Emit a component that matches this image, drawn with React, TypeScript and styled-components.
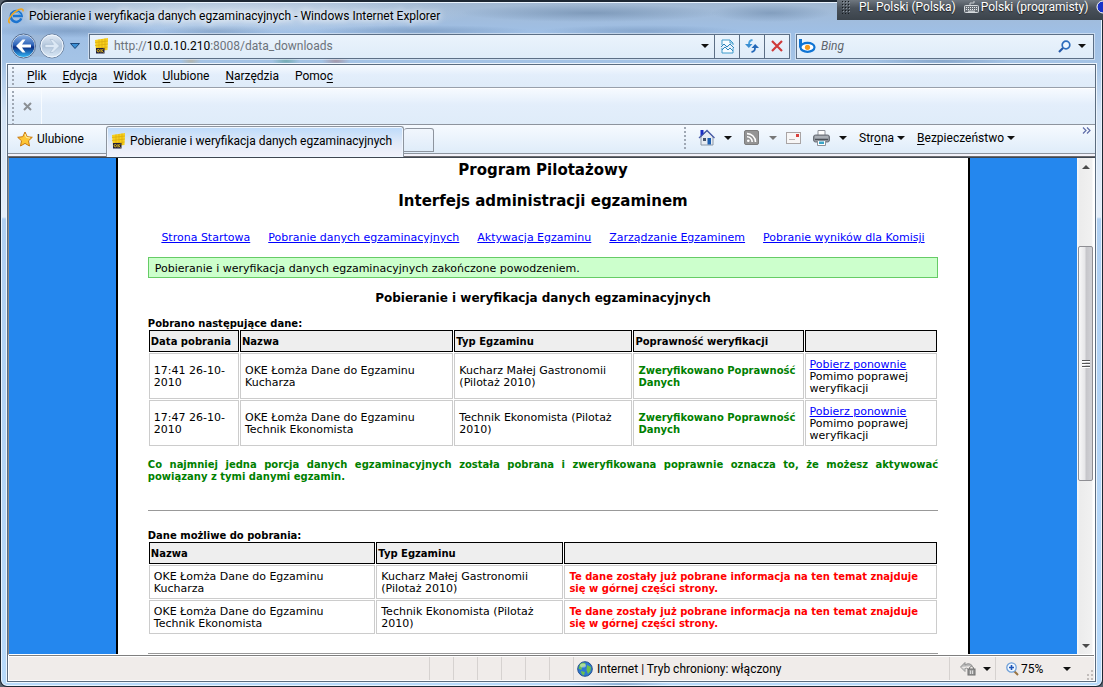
import React from "react";
import styled, { createGlobalStyle, css } from "styled-components";

const uiFont = `Roboto, "Open Sans", "Liberation Sans", sans-serif`;
const pageFont = `"DejaVu Sans", "Liberation Sans", sans-serif`;

const GlobalStyle = createGlobalStyle`
  *, *::before, *::after { box-sizing: border-box; }
  html, body, #root { height: 100%; }
  body { margin: 0; background: #59636e; font-family: ${uiFont}; font-size: 12px; line-height: 16px; color: #000; }
  button, input { font: inherit; color: inherit; }
  button { border: 0; padding: 0; background: none; }
  svg { display: block; flex: none; }
  u { text-underline-offset: 2px; }
`;

/* ---------- window frame ---------- */

const Window = styled.div`
  position: relative;
  height: 100vh;
  display: flex;
  flex-direction: column;
  padding: 1px 7px 4px;
  border: 1px solid #1d2733;
  border-top-width: 2px;
  border-radius: 7px;
  overflow: hidden;
  background:
    radial-gradient(ellipse 240px 20px at 230px 12px, rgba(235, 243, 250, 0.6), transparent),
    radial-gradient(ellipse 90px 7px at 70px 29px, rgba(90, 122, 162, 0.4), transparent),
    radial-gradient(ellipse 60px 6px at 215px 29px, rgba(90, 122, 162, 0.4), transparent),
    radial-gradient(ellipse 110px 6px at 420px 29px, rgba(90, 122, 162, 0.4), transparent),
    radial-gradient(ellipse 100px 6px at 640px 29px, rgba(90, 122, 162, 0.35), transparent),
    radial-gradient(ellipse 130px 9px at 590px 11px, rgba(85, 115, 150, 0.45), transparent),
    radial-gradient(ellipse 60px 9px at 770px 11px, rgba(85, 115, 150, 0.4), transparent),
    radial-gradient(ellipse 14px 5px at 285px 59px, rgba(70, 150, 130, 0.5), transparent),
    radial-gradient(ellipse 14px 5px at 335px 59px, rgba(170, 90, 80, 0.4), transparent),
    radial-gradient(ellipse 10px 5px at 190px 59px, rgba(200, 160, 90, 0.4), transparent),
    radial-gradient(ellipse 70px 4px at 940px 59px, rgba(90, 122, 162, 0.4), transparent),
    radial-gradient(ellipse 50px 5px at 620px 683px, rgba(90, 125, 165, 0.5), transparent),
    linear-gradient(#a3b9d2 0, #9fbfe5 30px, #a5c4e6 62px, #d3e3f5 110px, #e4eef9 215px, #b0d0f2 217px, #b8dafa 100%);
  box-shadow: inset 0 0 0 1px #e9f3fd;
`;

const TitleBar = styled.header`
  display: flex;
  align-items: center;
  gap: 5px;
  height: 26px;
  flex: none;
`;

const Title = styled.h1`
  margin: 0;
  font-size: 12px;
  line-height: 16px;
  font-weight: 400;
  text-shadow: 0 0 6px #fff, 0 0 8px #fff;
`;

const LanguageBar = styled.aside`
  position: absolute;
  top: 0;
  right: 0;
  width: 266px;
  height: 20px;
  display: flex;
  align-items: center;
  padding: 0 0 6px 4px;
  background: linear-gradient(#6f7780, #49515a 40%, #3b434b);
  color: #fff;
  overflow: hidden;
  white-space: nowrap;
`;

const GripDots = styled.svg`
  margin-right: 9px;
`;

const LanguageName = styled.span`
  margin-right: 8px;
  text-shadow: 0 1px 1px #222;
`;

const LayoutName = styled(LanguageName)`
  margin-left: 2px;
`;

const NavBar = styled.nav`
  display: flex;
  align-items: center;
  height: 35px;
  padding: 0 1px 1px 3px;
  flex: none;
`;

const NavButtons = styled.div`
  display: flex;
  align-items: center;
  width: 78px;
`;

const PlainButton = styled.button`
  display: flex;
  align-items: center;
  justify-content: center;
`;

const HistoryButton = styled(PlainButton)`
  margin-left: 5px;
`;

const Field = styled.div<{ $fixed?: boolean }>`
  display: flex;
  align-items: center;
  height: 25px;
  border: 1px solid #5c6f86;
  box-shadow: 0 0 0 1px rgba(255, 255, 255, 0.45);
  background: linear-gradient(#eaf3fc, #dfecf9);
  ${(p) => (p.$fixed ? css`width: 298px; flex: none; margin-left: 6px; padding: 0 2px;` : css`flex: 1; min-width: 0; padding-left: 4px;`)}
`;

const AddressText = styled.label`
  position: relative;
  flex: 1;
  min-width: 0;
  margin-left: 5px;
  color: #6c737b;
  white-space: nowrap;
  b { font-weight: 400; color: #000; }
`;

const HiddenInput = styled.input`
  position: absolute;
  inset: 0;
  width: 100%;
  border: 0;
  padding: 0;
  background: transparent;
  color: transparent;
  outline: 0;
`;

const SearchInput = styled.input`
  flex: 1;
  min-width: 0;
  margin-left: 5px;
  border: 0;
  padding: 0;
  background: transparent;
  outline: 0;
  &::placeholder { color: #5d646c; font-style: italic; opacity: 1; }
`;

const FieldButton = styled(PlainButton)<{ $framed?: boolean }>`
  height: 23px;
  width: ${(p) => (p.$framed ? 25 : 18)}px;
  border-left: ${(p) => (p.$framed ? "1px solid #5c6f86" : "0")};
`;

/* ---------- inner area ---------- */

const Inner = styled.div`
  flex: 1;
  min-height: 0;
  display: flex;
  flex-direction: column;
  border: 1px solid #5b6c7f;
  box-shadow: 0 0 0 1px #edf5fd;
  background: #fff;
  margin-right: -1px;
  margin-left: -1px;
`;

const barFill = css`
  background: linear-gradient(#f6faff, #e3eefb 45%, #dfecf9);
`;

const DottedEdge = styled.span`
  width: 2px;
  align-self: stretch;
  background: radial-gradient(circle, #9fa8b4 1px, transparent 1px) 0 1px / 2px 4px;
  flex: none;
`;

const MenuBar = styled.div`
  ${barFill}
  display: flex;
  align-items: center;
  height: 23px;
  padding-left: 4px;
  border-bottom: 1px solid #98a0ab;
  flex: none;
`;

const MenuItem = styled.button`
  margin-right: 16px;
  &:first-of-type { margin-left: 13px; }
`;

const EmptyBar = styled.div`
  ${barFill}
  display: flex;
  align-items: center;
  height: 36px;
  padding-left: 4px;
  border-top: 1px solid #fff;
  flex: none;
`;

const CloseCell = styled(PlainButton)`
  width: 28px;
  height: 35px;
  border-right: 1px solid #f7fbff;
`;

const TabRow = styled.div`
  display: flex;
  align-items: stretch;
  height: 33px;
  padding-bottom: 4px;
  border-top: 1px solid #8d949e;
  border-bottom: 1px solid #6d6d70;
  background:
    linear-gradient(#f6faff, #dfecf9) 0 0 / 100% 28px no-repeat,
    linear-gradient(#8d949e, #8d949e) 0 28px / 100% 1px no-repeat,
    #f3f2fa;
  flex: none;
`;

const Favorites = styled(PlainButton)`
  width: 98px;
  justify-content: flex-start;
  gap: 4px;
  padding-left: 9px;
`;

const Tab = styled.button`
  display: flex;
  align-items: center;
  gap: 4px;
  width: 298px;
  height: 31px;
  margin-top: 1px;
  padding: 0 4px 3px;
  border: 1px solid #8d949e;
  border-bottom: 0;
  border-radius: 3px 3px 0 0;
  background: linear-gradient(#bcdafa, #dfe9f8 50%, #f3f2fa);
  box-shadow: inset 0 0 0 1px #eef6ff;
  white-space: nowrap;
`;

const NewTab = styled.button`
  width: 30px;
  margin-top: 3px;
  border: 1px solid #8d949e;
  border-left: 0;
  border-radius: 3px 3px 0 0;
  background: linear-gradient(#f1f6fd, #dfecf9);
`;

const Commands = styled.div`
  flex: 1;
  display: flex;
  align-items: center;
  justify-content: flex-end;
  padding: 0 3px 2px 0;
`;

const CommandButton = styled(PlainButton)<{ $before?: number }>`
  gap: 3px;
  margin-left: ${(p) => p.$before ?? 10}px;
  white-space: nowrap;
`;

const Overflow = styled(PlainButton)`
  width: 12px;
  height: 21px;
  margin-left: 65px;
  align-items: flex-start;
`;

/* ---------- page ---------- */

const Viewport = styled.main`
  flex: 1;
  min-height: 0;
  display: flex;
  border-top: 1px solid #3f4650;
  border-left: 1px solid #8b8b8b;
  border-bottom: 1px solid #fff;
`;

const Canvas = styled.div`
  flex: 1;
  min-width: 0;
  overflow: hidden;
  background: #2487ee;
  font-family: ${pageFont};
  font-size: 11px;
  line-height: 12px;
`;

const Sheet = styled.div`
  width: 80%;
  min-height: 100%;
  margin: 0 auto;
  padding: 2px 30px 0;
  border: solid #000;
  border-width: 0 2px;
  background: #fff;
`;

const PageTitle = styled.h2`
  margin: 0 0 11px;
  font-size: 15px;
  line-height: 20px;
  text-align: center;
`;

const PageLinks = styled.nav`
  display: flex;
  justify-content: center;
  gap: 18px;
  margin: 21px 0 13px;
  white-space: nowrap;
`;

const PageLink = styled.a`
  color: #0000ff;
  text-decoration: underline;
`;

const Notice = styled.p`
  margin: 0 0 12px;
  padding: 5px 6px 2px;
  line-height: 12px;
  border: 1px solid #66cc66;
  background: #ccffcc;
`;

const SectionTitle = styled.h3`
  margin: 0 0 12px;
  font-size: 12px;
  line-height: 16px;
  text-align: center;
`;

const DataTable = styled.table`
  width: 100%;
  table-layout: fixed;
  border-spacing: 1px;
  caption { text-align: left; font-size: 10px; line-height: 11px; font-weight: 700; white-space: nowrap; }
  th { height: 22px; padding: 5px 1px 3px; font-size: 10px; text-align: left; border: 1px solid #000; background: #eee; white-space: nowrap; }
  td { padding: 5px 4px 3px; border: 1px solid #ccc; }
`;

const Col = styled.col<{ $w: number }>`
  width: ${(p) => p.$w}%;
`;

const Strong = styled.strong<{ $tone: "ok" | "warn" }>`
  display: block;
  font-size: 10px;
  color: ${(p) => (p.$tone === "ok" ? "#008000" : "#ff0000")};
`;

const Summary = styled.p`
  margin: 12px 0 27px;
  color: #008000;
  font-size: 10px;
  font-weight: 700;
  text-align: justify;
`;

const Rule = styled.hr`
  margin: 18px 0 19px;
  border: 0;
  border-top: 1px solid #999;
`;

const ScrollBar = styled.div`
  width: 18px;
  display: flex;
  flex-direction: column;
  align-items: flex-start;
  background: linear-gradient(90deg, #fafafa, #ececec 3px, #f1f1f1 15px, #fff 16px);
  flex: none;
`;

const ScrollButton = styled(PlainButton)`
  width: 18px;
  height: 17px;
`;

const ScrollTrack = styled.div`
  flex: 1;
  padding: 71px 0 0 1px;
`;

const ScrollThumb = styled.button`
  display: flex;
  align-items: center;
  justify-content: center;
  width: 15px;
  height: 60%;
  min-height: 20px;
  border: 1px solid #8e8e93;
  border-radius: 2px;
  background: linear-gradient(90deg, #f8f8f8, #e6e6e8 45%, #c6c6ca 55%, #d2d2d6);
`;

const StatusBar = styled.footer`
  display: flex;
  align-items: stretch;
  height: 26px;
  border: 1px solid #fff;
  border-top: 0;
  background: linear-gradient(#7f7f7f, #7f7f7f) 0 0 / 100% 1px no-repeat, linear-gradient(#fff, #fff) 0 0 / 100% 2px no-repeat, #f0ecea;
  flex: none;
`;

const StatusCell = styled.div<{ $w?: number }>`
  ${(p) => (p.$w ? css`width: ${p.$w}px; flex: none;` : css`flex: 1;`)}
  display: flex;
  align-items: center;
  gap: 4px;
  margin-top: 2px;
  padding-left: 3px;
  border-left: 1px solid #d6d2d0;
  white-space: nowrap;
  &:first-child { border-left: 0; }
`;

const StatusSpacer = styled(StatusCell)`
  flex: 0 0 420px;
`;

const StatusTool = styled(PlainButton)<{ $wide?: boolean }>`
  flex: 1;
  justify-content: flex-start;
  gap: ${(p) => (p.$wide ? 2 : 7)}px;
  padding-left: 7px;
  > svg:last-child { margin-left: ${(p) => (p.$wide ? 18 : 0)}px; }
`;

const GripCorner = styled.svg`
  align-self: flex-end;
`;

/* ---------- icons ---------- */

const Arrow = ({ color = "#111", up = false }: { color?: string; up?: boolean }) => (
  <svg width="8" height="4" viewBox="0 0 8 4"><path d={up ? "M0 4L4 0L8 4Z" : "M0 0H8L4 4Z"} fill={color} /></svg>
);

const IeIcon = () => (
  <svg width="16" height="16" viewBox="0 0 16 16">
    <path d="M13.3 10.4A5.4 5.4 0 1 1 13.6 8H5" fill="none" stroke="#1c74d0" strokeWidth="2.6" />
    <path d="M12.6 7.2A4.6 4.6 0 0 0 4.2 6" fill="none" stroke="#6cc0f5" strokeWidth="1" />
    <path d="M2 15C-1 13.5 2 7.5 7 3.8S15.6.2 15 3.4" fill="none" stroke="#f0a51c" strokeWidth="1.6" />
  </svg>
);

const BackForward = () => (
  <svg width="54" height="26" viewBox="0 0 54 26">
    <defs>
      <linearGradient id="bk" x1="0" y1="0" x2="0" y2="1">
        <stop offset="0" stopColor="#8fb4e4" /><stop offset=".45" stopColor="#2c62b8" />
        <stop offset=".55" stopColor="#0a2f86" /><stop offset="1" stopColor="#35b4f4" />
      </linearGradient>
      <linearGradient id="fw" x1="0" y1="0" x2="0" y2="1">
        <stop offset="0" stopColor="#e4edf7" /><stop offset=".5" stopColor="#b3c6dc" /><stop offset="1" stopColor="#dceaf7" />
      </linearGradient>
    </defs>
    <path d="M12 1Q27 3 41 1V25Q27 22 12 25Z" fill="#9db6d4" opacity=".7" />
    <circle cx="12.5" cy="13" r="12" fill="#fff" stroke="#4d678c" />
    <circle cx="12.5" cy="13" r="11" fill="url(#bk)" />
    <path d="M5 13L11.500 6.500H14.500L11 11.400H20V14.600H11L14.500 19.500H11.500Z" fill="#fff" />
    <circle cx="41" cy="13" r="12" fill="url(#fw)" stroke="#6f86a4" />
    <circle cx="41" cy="13" r="11" fill="none" stroke="#f2f8ff" />
    <path d="M48.500 13L42 6.500H39L42.500 11.400H34V14.600H42.500L39 19.500H42Z" fill="#dce8f5" stroke="#a5b8cf" strokeWidth=".6" />
  </svg>
);

const OkeIcon = () => (
  <svg width="15" height="16" viewBox="0 0 15 16">
    <path d="M1 2L14 0L13.500 12L2 13.500Z" fill="#f7cf1c" />
    <path d="M1 4.500L14 3M1 7.500L14 6M2 10.500L13.500 9M5 1.500V10M8 1V10M11 .5V12" stroke="#d8a90e" strokeWidth=".7" />
    <path d="M2 10H10.500V15.500H2Z" fill="#1f1d3c" />
    <circle cx="4.300" cy="12.700" r="1.200" fill="none" stroke="#f5c918" strokeWidth=".9" />
    <path d="M7 11V14.500M9.500 11L7.500 12.700L9.500 14.500" fill="none" stroke="#f5c918" strokeWidth=".9" />
  </svg>
);

const CompatIcon = () => (
  <svg width="13" height="15" viewBox="0 0 13 15">
    <path d="M1 6V1H9L12 4V6M1 9V14H12V9" fill="#f6fbff" stroke="#3f9bcb" />
    <path d="M9 1V4H12" fill="none" stroke="#3f9bcb" />
    <path d="M0 8L3 5L6 8L9 5L13 9M1 11L4 8L7 11L9 9L12 12" fill="none" stroke="#2f86bd" />
  </svg>
);

const RefreshIcon = () => (
  <svg width="14" height="14" viewBox="0 0 14 14">
    <path d="M7.500 1Q4 1.500 4 5" fill="none" stroke="#4aa0dc" strokeWidth="1.800" /><path d="M0 5H7.500L3.800 9Z" fill="#3a8ed2" />
    <path d="M6.500 13Q10 12.500 10 9" fill="none" stroke="#2468b8" strokeWidth="1.800" /><path d="M6.500 9H14L10.200 5Z" fill="#2468b8" />
  </svg>
);

const StopIcon = () => (
  <svg width="12" height="12" viewBox="0 0 12 12"><path d="M1 1L11 11M11 1L1 11" stroke="#cf3a3a" strokeWidth="2.200" /></svg>
);

const BingIcon = () => (
  <svg width="17" height="14" viewBox="0 0 17 14">
    <path d="M1.500 0V8.500" stroke="#0f74d4" strokeWidth="3" />
    <ellipse cx="8.500" cy="8.300" rx="7" ry="4.500" fill="#fff" stroke="#0f74d4" strokeWidth="2.200" />
    <circle cx="8.500" cy="8.300" r="2.600" fill="#f79a1c" />
  </svg>
);

const MagnifierIcon = () => (
  <svg width="13" height="13" viewBox="0 0 13 13">
    <circle cx="8" cy="5" r="3.800" fill="#eef7ff" stroke="#2d6dbd" strokeWidth="1.700" /><path d="M5 8L1 12" stroke="#2559a8" strokeWidth="2.200" />
  </svg>
);

const StarIcon = () => (
  <svg width="16" height="16" viewBox="0 0 16 16">
    <path d="M8 1L10.200 5.700L15.300 6.300L11.500 9.800L12.500 15L8 12.400L3.500 15L4.500 9.800L.7 6.300L5.800 5.700Z" fill="#fdc636" stroke="#c9780e" strokeLinejoin="round" />
    <path d="M8 3L9.400 6.500L13 7" fill="none" stroke="#fff0a8" />
  </svg>
);

const HomeIcon = () => (
  <svg width="17" height="17" viewBox="0 0 17 17">
    <path d="M3 8V16H15V8L9 2Z" fill="#e6ebf2" stroke="#8a97a8" />
    <path d="M1 9L9 1.500L16.500 9" fill="none" stroke="#4a5da8" strokeWidth="1.300" />
    <path d="M2.500 1H5.500V4.500L2.500 7Z" fill="#1c2fc4" /><rect x="9.500" y="9" width="3.500" height="6.500" fill="#1d5fb0" />
    <rect x="5" y="9" width="3" height="3" fill="#47546b" />
  </svg>
);

const FeedIcon = () => (
  <svg width="15" height="15" viewBox="0 0 15 15">
    <rect x=".5" y=".5" width="14" height="14" rx="1.500" fill="#949494" stroke="#7d7d7d" />
    <circle cx="4.300" cy="10.800" r="1.300" fill="#fff" />
    <path d="M3 6.800A5 5 0 0 1 8.200 12M3 3.600A8.300 8.300 0 0 1 11.500 12" fill="none" stroke="#fff" strokeWidth="1.600" />
  </svg>
);

const MailIcon = () => (
  <svg width="15" height="12" viewBox="0 0 15 12">
    <rect x=".5" y=".5" width="14" height="11" fill="#f7f6f6" stroke="#a9a4a4" /><rect x="10" y="2" width="3" height="3" fill="#d9413c" />
    <path d="M3 7.500H9" stroke="#b9b6b6" />
  </svg>
);

const PrinterIcon = () => (
  <svg width="17" height="16" viewBox="0 0 17 16">
    <path d="M5 5V.5H12V5" fill="#fff" stroke="#8d9199" />
    <rect x=".5" y="5" width="16" height="7" rx="2" fill="#8d939b" stroke="#6c7179" />
    <path d="M2 7H15" stroke="#c6cad0" /><path d="M2 9.500H15" stroke="#4c5158" /><path d="M4.500 10.500H12.500V15.500H4.500Z" fill="#fff" stroke="#8d9199" />
    <rect x="6" y="11.500" width="5" height="2.500" fill="#3ba6c9" />
  </svg>
);

const KeyboardIcon = () => (
  <svg width="15" height="12" viewBox="0 0 15 12">
    <path d="M6 4V2H10V0" fill="none" stroke="#c8ccd0" />
    <rect x=".5" y="4.500" width="14" height="7" rx="1" fill="#6a7178" stroke="#d4d8dc" />
    <path d="M2 6.500H13M2 8.500H13" stroke="#e8ecf0" strokeDasharray="1 1" /><path d="M4 10.200H11" stroke="#e8ecf0" />
  </svg>
);

const GlobeIcon = () => (
  <svg width="16" height="16" viewBox="0 0 16 16">
    <circle cx="8" cy="8" r="7.300" fill="#2c78d4" stroke="#24508c" />
    <path d="M3 3Q6 1 8.500 2L8 5L5 6L4.500 9L1.500 7.500ZM10 4L14 6L13.500 10L11 13L9.500 9Z M4 10L8 11L7 14.500Q4 13.500 4 10Z" fill="#6cc04e" />
    <ellipse cx="6" cy="4.500" rx="3" ry="2" fill="#fff" opacity=".45" />
  </svg>
);

const PrivacyIcon = () => (
  <svg width="16" height="15" viewBox="0 0 16 15">
    <path d="M.5 6L5 1.500V4Q9 1 12.500 5" fill="#b9b9b9" stroke="#8f8f8f" /><path d="M.5 6L5 10.500V7.500Q7 6.500 8 8" fill="#d2d2d2" stroke="#9a9a9a" />
    <rect x="8" y="8" width="7" height="6" fill="#9a9a9a" stroke="#6c6c6c" /><path d="M9.500 8V6.500Q11.500 4 13.500 6.500V8" fill="none" stroke="#777" />
    <path d="M10.500 9.500V13M12.500 9.500V13" stroke="#ddd" />
  </svg>
);

const ZoomIcon = () => (
  <svg width="13" height="14" viewBox="0 0 13 14">
    <path d="M8 9L12 13" stroke="#9a7440" strokeWidth="2" /><circle cx="5.500" cy="5.500" r="4.700" fill="#f1f8ff" stroke="#6f9fd8" strokeWidth="1.300" />
    <path d="M5.500 3V8M3 5.500H8" stroke="#1d55b8" strokeWidth="1.600" />
  </svg>
);

/* ---------- data ---------- */

const menu: [string, string, string][] = [
  ["", "P", "lik"], ["", "E", "dycja"], ["", "W", "idok"], ["", "U", "lubione"], ["", "N", "arzędzia"], ["Pomo", "c", ""],
];

const links = ["Strona Startowa", "Pobranie danych egzaminacyjnych", "Aktywacja Egzaminu", "Zarządzanie Egzaminem", "Pobranie wyników dla Komisji"];

const exams = [
  { time: "17:41 26-10-2010", name: ["OKE Łomża Dane do Egzaminu", "Kucharza"], type: "Kucharz Małej Gastronomii (Pilotaż 2010)" },
  { time: "17:47 26-10-2010", name: ["OKE Łomża Dane do Egzaminu", "Technik Ekonomista"], type: "Technik Ekonomista (Pilotaż 2010)" },
];

export default function App() {
  return (
    <>
      <GlobalStyle />
      <Window>
        <TitleBar>
          <IeIcon />
          <Title>Pobieranie i weryfikacja danych egzaminacyjnych - Windows Internet Explorer</Title>
        </TitleBar>
        <NavBar>
          <NavButtons>
            <PlainButton aria-label="Wstecz i dalej"><BackForward /></PlainButton>
            <HistoryButton aria-label="Historia">
              <svg width="10" height="6" viewBox="0 0 10 6"><path d="M.5 .5H9.500L5 5.500Z" fill="#3c8fd4" stroke="#1c4778" /></svg>
            </HistoryButton>
          </NavButtons>
          <Field>
            <OkeIcon />
            <AddressText>
              http://<b>10.0.10.210</b>:8008/data_downloads
              <HiddenInput aria-label="Adres" />
            </AddressText>
            <FieldButton aria-label="Lista adresów"><Arrow /></FieldButton>
            <FieldButton $framed aria-label="Zgodność"><CompatIcon /></FieldButton>
            <FieldButton $framed aria-label="Odśwież"><RefreshIcon /></FieldButton>
            <FieldButton $framed aria-label="Zatrzymaj"><StopIcon /></FieldButton>
          </Field>
          <Field $fixed>
            <BingIcon />
            <SearchInput placeholder="Bing" aria-label="Wyszukaj" />
            <FieldButton aria-label="Szukaj"><MagnifierIcon /></FieldButton>
            <FieldButton aria-label="Opcje wyszukiwania"><Arrow /></FieldButton>
          </Field>
        </NavBar>

        <Inner>
          <MenuBar>
            <DottedEdge />
            {menu.map(([a, key, b]) => (
              <MenuItem key={a + key + b}>{a}<u>{key}</u>{b}</MenuItem>
            ))}
          </MenuBar>
          <EmptyBar>
            <DottedEdge />
            <CloseCell aria-label="Zamknij pasek">
              <svg width="9" height="9" viewBox="0 0 9 9"><path d="M1 1L8 8M8 1L1 8" stroke="#8b8f94" strokeWidth="2" /></svg>
            </CloseCell>
          </EmptyBar>
          <TabRow>
            <Favorites><StarIcon />Ulubione</Favorites>
            <Tab><OkeIcon />Pobieranie i weryfikacja danych egzaminacyjnych</Tab>
            <NewTab aria-label="Nowa karta" />
            <Commands>
              <DottedEdge />
              <CommandButton $before={12} aria-label="Strona główna"><HomeIcon /></CommandButton>
              <CommandButton $before={9} aria-label="Opcje strony głównej"><Arrow /></CommandButton>
              <CommandButton $before={12} aria-label="Kanały"><FeedIcon /></CommandButton>
              <CommandButton aria-label="Opcje kanałów"><Arrow color="#777" /></CommandButton>
              <CommandButton $before={9} aria-label="Poczta"><MailIcon /></CommandButton>
              <CommandButton $before={12} aria-label="Drukuj"><PrinterIcon /></CommandButton>
              <CommandButton $before={9} aria-label="Opcje drukowania"><Arrow /></CommandButton>
              <CommandButton $before={12}><span>Str<u>o</u>na</span><Arrow /></CommandButton>
              <CommandButton $before={12}><span><u>B</u>ezpieczeństwo</span><Arrow /></CommandButton>
              <Overflow aria-label="Więcej">
                <svg width="9" height="7" viewBox="0 0 9 7"><path d="M1 .5L4 3.500L1 6.500M5 .5L8 3.500L5 6.500" fill="none" stroke="#5f6da8" strokeWidth="1.200" /></svg>
              </Overflow>
            </Commands>
          </TabRow>

          <Viewport>
            <Canvas>
              <Sheet>
                <PageTitle>Program Pilotażowy</PageTitle>
                <PageTitle>Interfejs administracji egzaminem</PageTitle>
                <PageLinks>
                  {links.map((l) => <PageLink key={l} href="#">{l}</PageLink>)}
                </PageLinks>
                <Notice>Pobieranie i weryfikacja danych egzaminacyjnych zakończone powodzeniem.</Notice>
                <SectionTitle>Pobieranie i weryfikacja danych egzaminacyjnych</SectionTitle>
                <DataTable>
                  <caption>Pobrano następujące dane:</caption>
                  <colgroup><Col $w={11.5} /><Col $w={27.2} /><Col $w={22.7} /><Col $w={21.7} /><col /></colgroup>
                  <thead>
                    <tr><th>Data pobrania</th><th>Nazwa</th><th>Typ Egzaminu</th><th>Poprawność weryfikacji</th><th /></tr>
                  </thead>
                  <tbody>
                    {exams.map((e) => (
                      <tr key={e.time}>
                        <td>{e.time}</td>
                        <td>{e.name[0]}<br />{e.name[1]}</td>
                        <td>{e.type}</td>
                        <td><Strong $tone="ok">Zweryfikowano Poprawność Danych</Strong></td>
                        <td><PageLink href="#">Pobierz ponownie</PageLink><br />Pomimo poprawej weryfikacji</td>
                      </tr>
                    ))}
                  </tbody>
                </DataTable>
                <Summary>
                  Co najmniej jedna porcja danych egzaminacyjnych została pobrana i zweryfikowana poprawnie oznacza to, że możesz aktywować powiązany z tymi danymi egzamin.
                </Summary>
                <Rule />
                <DataTable>
                  <caption>Dane możliwe do pobrania:</caption>
                  <colgroup><Col $w={28.8} /><Col $w={23.8} /><col /></colgroup>
                  <thead>
                    <tr><th>Nazwa</th><th>Typ Egzaminu</th><th /></tr>
                  </thead>
                  <tbody>
                    {exams.map((e) => (
                      <tr key={e.time}>
                        <td>{e.name[0]}<br />{e.name[1]}</td>
                        <td>{e.type}</td>
                        <td><Strong $tone="warn">Te dane zostały już pobrane informacja na ten temat znajduje się w górnej części strony.</Strong></td>
                      </tr>
                    ))}
                  </tbody>
                </DataTable>
                <Rule />
              </Sheet>
            </Canvas>
            <ScrollBar>
              <ScrollButton aria-label="W górę"><Arrow up color="#4a4a4a" /></ScrollButton>
              <ScrollTrack>
                <ScrollThumb aria-label="Przewiń">
                  <svg width="8" height="9" viewBox="0 0 8 9"><path d="M0 1.500H8M0 4.500H8M0 7.500H8" stroke="#555" /><path d="M0 2.500H8M0 5.500H8M0 8.500H8" stroke="#fff" /></svg>
                </ScrollThumb>
              </ScrollTrack>
              <ScrollButton aria-label="W dół"><Arrow color="#4a4a4a" /></ScrollButton>
            </ScrollBar>
          </Viewport>

          <StatusBar>
            <StatusSpacer />
            <StatusCell $w={24} /><StatusCell $w={24} /><StatusCell $w={24} />
            <StatusCell $w={24} /><StatusCell $w={24} /><StatusCell $w={24} />
            <StatusCell><GlobeIcon />Internet | Tryb chroniony: włączony</StatusCell>
            <StatusCell $w={46}><StatusTool aria-label="Prywatność"><PrivacyIcon /><Arrow /></StatusTool></StatusCell>
            <StatusCell $w={89}><StatusTool $wide><ZoomIcon />75%<Arrow /></StatusTool></StatusCell>
            <GripCorner width="10" height="10" viewBox="0 0 10 10">
              <path d="M7 0h2v2h-2zM7 4h2v2h-2zM7 8h2v2h-2zM3 4h2v2h-2zM3 8h2v2h-2z" fill="#c2bdbb" />
            </GripCorner>
          </StatusBar>
        </Inner>

      </Window>
      <LanguageBar>
        <GripDots width="9" height="14" viewBox="0 0 9 14">
          <path d="M1 1.500H9M1 4.500H9M1 7.500H9M1 10.500H9M1 13.500H9" stroke="#15191d" strokeDasharray="1 2" />
          <path d="M2 2.500H9M2 5.500H9M2 8.500H9M2 11.500H9" stroke="#8d959d" strokeDasharray="1 2" />
        </GripDots>
        <LanguageName>PL Polski (Polska)</LanguageName>
        <KeyboardIcon />
        <LayoutName>Polski (programisty)</LayoutName>
        <svg width="12" height="14" viewBox="0 0 12 14"><circle cx="7" cy="7" r="6" fill="#1a32c8" stroke="#fff" /></svg>
      </LanguageBar>
    </>
  );
}
